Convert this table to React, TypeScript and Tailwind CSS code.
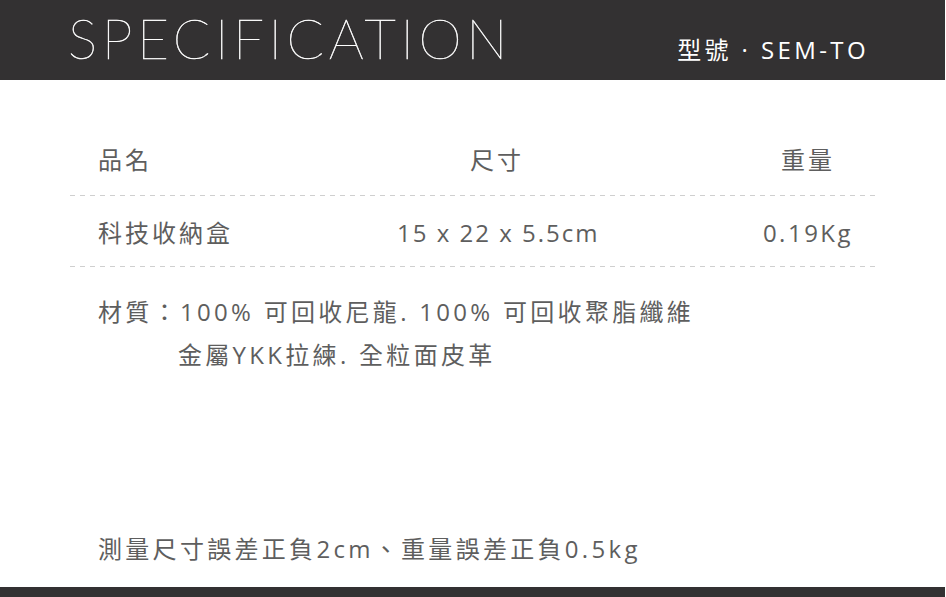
const body = '"Open Sans", "Noto Sans CJK TC", sans-serif';

function Dashed() {
  return (
    <div
      className="h-px w-[805px] ml-[70px]"
      style={{ backgroundImage: 'linear-gradient(to right, #cfcfcf 50%, transparent 50%)', backgroundSize: '10px 1px' }}
    />
  );
}

export default function App() {
  return (
    <div className="w-[946px] h-[597px] bg-white flex flex-col text-[#5e5e5e]" style={{ fontFamily: body }}>
      <header className="h-[80px] w-[945px] bg-[#333132] flex items-start justify-between pl-[68px] pr-[76px]">
        <h1
          className="text-[55px] leading-none text-white font-thin tracking-[4.6px] pt-[11px] [-webkit-text-stroke:0.5px_white]"
          style={{ fontFamily: 'Lato, sans-serif' }}
        >
          SPECIFICATION
        </h1>
        <div className="text-[24px] leading-[30px] text-white tracking-[3.4px] pt-[35px]">型號 · SEM-TO</div>
      </header>

      <div className="flex-1 flex flex-col text-[24px] leading-[30px] tracking-[3px]">
        <div className="flex mt-[65px]">
          <div className="pl-[98px] w-[397px]">品名</div>
          <div className="w-[200px] text-center">尺寸</div>
          <div className="ml-[111px] w-[200px] text-center">重量</div>
        </div>
        <div className="mt-[20px]">
          <Dashed />
        </div>
        <div className="flex mt-[22px] mb-[18px]">
          <div className="pl-[98px] w-[397px]">科技收納盒</div>
          <div className="w-[200px] text-center whitespace-nowrap tracking-[2px]">15 x 22 x 5.5cm</div>
          <div className="ml-[111px] w-[200px] text-center tracking-[2.5px]">0.19Kg</div>
        </div>
        <Dashed />

        <div className="pl-[98px] mt-[23px] leading-[43px] tracking-[3.3px]">
          <div>材質：100% 可回收尼龍. 100% 可回收聚脂纖維</div>
          <div className="pl-[80px]">金屬YKK拉練. 全粒面皮革</div>
        </div>

        <div className="mt-auto pl-[98px] pb-[23px] tracking-[3.3px]">
          測量尺寸誤差正負2cm、重量誤差正負0.5kg
        </div>
      </div>

      <footer className="h-[10px] w-[945px] bg-[#333132]" />
    </div>
  );
}
